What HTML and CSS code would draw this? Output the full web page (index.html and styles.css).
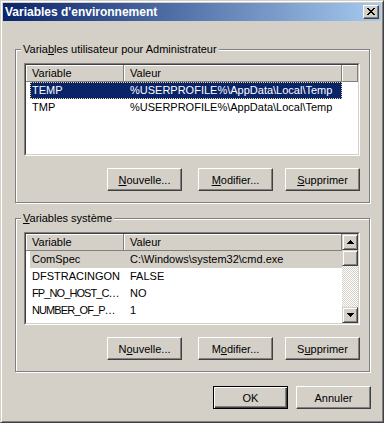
FILE: index.html
```html
<!DOCTYPE html>
<html lang="fr">
<head>
<meta charset="utf-8">
<title>Variables d'environnement</title>
<link rel="stylesheet" href="styles.css">
</head>
<body>
<div class="window">
  <div class="titlebar">
    <span class="title">Variables d'environnement</span>
    <button class="close" aria-label="Fermer">
      <svg width="8" height="7" viewBox="0 0 8 7" shape-rendering="crispEdges"><path d="M0 0h2v1H0zM6 0h2v1H6zM1 1h2v1H1zM5 1h2v1H5zM2 2h4v1H2zM3 3h2v1H3zM2 4h4v1H2zM1 5h2v1H1zM5 5h2v1H5zM0 6h2v1H0zM6 6h2v1H6z" fill="#000"/></svg>
    </button>
  </div>
  <div class="content">
    <section class="group">
      <span class="legend">Varia<u>b</u>les utilisateur pour Administrateur</span>
      <div class="list">
        <div class="list-inner">
          <div class="list-main">
            <div class="header">
              <div class="hcell c1">Variable</div>
              <div class="hcell c2">Valeur</div>
              <div class="hcell filler"></div>
            </div>
            <div class="row selected"><span class="cell c1">TEMP</span><span class="cell c2">%USERPROFILE%\AppData\Local\Temp</span></div>
            <div class="row"><span class="cell c1">TMP</span><span class="cell c2">%USERPROFILE%\AppData\Local\Temp</span></div>
          </div>
        </div>
      </div>
      <div class="btnrow">
        <button class="btn first"><u>N</u>ouvelle...</button>
        <button class="btn second"><u>M</u>odifier...</button>
        <button class="btn"><u>S</u>upprimer</button>
      </div>
    </section>

    <section class="group group-sys">
      <span class="legend"><u>V</u>ariables système</span>
      <div class="list">
        <div class="list-inner">
          <div class="list-main">
            <div class="header">
              <div class="hcell c1">Variable</div>
              <div class="hcell c2">Valeur</div>
            </div>
            <div class="row inactive"><span class="cell c1">ComSpec</span><span class="cell c2">C:\Windows\system32\cmd.exe</span></div>
            <div class="row"><span class="cell c1">DFSTRACINGON</span><span class="cell c2">FALSE</span></div>
            <div class="row"><span class="cell c1 trunc">FP_NO_HOST_C…</span><span class="cell c2">NO</span></div>
            <div class="row"><span class="cell c1 trunc">NUMBER_OF_P…</span><span class="cell c2">1</span></div>
          </div>
          <div class="vscroll">
            <div class="sb-btn">
              <svg width="7" height="4" viewBox="0 0 7 4" shape-rendering="crispEdges"><path d="M3 0h1v1H3zM2 1h3v1H2zM1 2h5v1H1zM0 3h7v1H0z" fill="#000"/></svg>
            </div>
            <div class="sb-btn"></div>
            <div class="sb-track"></div>
            <div class="sb-btn">
              <svg width="7" height="4" viewBox="0 0 7 4" shape-rendering="crispEdges"><path d="M0 0h7v1H0zM1 1h5v1H1zM2 2h3v1H2zM3 3h1v1H3z" fill="#000"/></svg>
            </div>
          </div>
        </div>
      </div>
      <div class="btnrow">
        <button class="btn first">N<u>o</u>uvelle...</button>
        <button class="btn second">M<u>o</u>difier...</button>
        <button class="btn">S<u>u</u>pprimer</button>
      </div>
    </section>

    <div class="dlg-buttons">
      <button class="btn default">OK</button>
      <button class="btn">Annuler</button>
    </div>
  </div>
</div>
</body>
</html>
```

FILE: styles.css
```css
* { box-sizing: border-box; }

body {
  margin: 0;
  font-family: "Liberation Sans", Arial, sans-serif;
  font-size: 11px;
  color: #000;
}

.window {
  width: 384px;
  height: 423px;
  background: #d4d0c8;
  border: 1px solid;
  border-color: #d4d0c8 #404040 #404040 #d4d0c8;
  box-shadow: inset 1px 1px #fff, inset -1px -1px #808080;
  padding: 2px;
}

.titlebar {
  height: 18px;
  display: flex;
  align-items: center;
  justify-content: space-between;
  background: linear-gradient(to right, #0a246a, #a6caf0);
  padding: 0 2px 0 2px;
}

.title {
  color: #fff;
  font-weight: bold;
  font-size: 12px;
  line-height: 18px;
  white-space: nowrap;
}

.close {
  width: 16px;
  height: 14px;
  padding: 2px 0 0 3px;
  margin: 0;
  background: #d4d0c8;
  border: 1px solid;
  border-color: #fff #404040 #404040 #fff;
  box-shadow: inset -1px -1px #808080;
  display: flex;
  align-items: flex-start;
  justify-content: flex-start;
}

.close svg { display: block; }

.content {
  padding: 28px 0 0 12px;
}

.group {
  position: relative;
  width: 355px;
  height: 154px;
  border: 1px solid #808080;
  box-shadow: inset 1px 1px #fff, 1px 1px #fff;
  padding: 13px 0 0 8px;
}

.group-sys {
  margin-top: 15px;
}

.legend {
  position: absolute;
  top: -7px;
  left: 5px;
  padding: 0 2px;
  line-height: 13px;
  background: #d4d0c8;
  white-space: nowrap;
}

.list {
  width: 336px;
  height: 93px;
  border: 1px solid;
  border-color: #808080 #fff #fff #808080;
}

.list-inner {
  height: 100%;
  border: 1px solid;
  border-color: #404040 #d4d0c8 #d4d0c8 #404040;
  background: #fff;
  display: flex;
  overflow: hidden;
}

.list-main {
  flex: 1;
  min-width: 0;
}

.header {
  display: flex;
  height: 17px;
}

.hcell {
  height: 17px;
  background: #d4d0c8;
  border-right: 1px solid #808080;
  border-bottom: 1px solid #808080;
  box-shadow: inset 1px 1px #fff;
  padding-left: 6px;
  line-height: 16px;
  white-space: nowrap;
}

.hcell.c1 { width: 98px; }
.hcell.c2 { width: 218px; }
.hcell.filler { flex: 1; }

.row {
  display: flex;
  height: 17px;
  line-height: 17px;
  margin-left: 4px;
  width: 312px;
  white-space: nowrap;
}

.cell { overflow: hidden; }
.row .c1 { width: 94px; padding-left: 2px; }
.row .c2 { width: 218px; padding-left: 6px; }
.row .trunc { letter-spacing: -0.9px; }

.row.selected {
  background: #0a246a;
  color: #fff;
  outline: 1px dotted #f0d890;
  outline-offset: -1px;
}

.row.inactive {
  background: #d4d0c8;
}

.vscroll {
  width: 16px;
  display: flex;
  flex-direction: column;
}

.sb-btn {
  height: 16px;
  flex: none;
  background: #d4d0c8;
  border: 1px solid;
  border-color: #d4d0c8 #404040 #404040 #d4d0c8;
  box-shadow: inset 1px 1px #fff, inset -1px -1px #808080;
  display: flex;
  align-items: center;
  justify-content: center;
}

.sb-btn svg { display: block; }

.sb-track {
  flex: 1;
  background: repeating-conic-gradient(#fff 0 25%, #d4d0c8 0 50%) 0 0 / 2px 2px;
}

.btnrow {
  width: 336px;
  display: flex;
  justify-content: flex-end;
  margin-top: 12px;
}

.btn {
  width: 75px;
  height: 23px;
  padding: 0;
  margin: 0;
  font-family: inherit;
  font-size: 11px;
  color: #000;
  background: #d4d0c8;
  border: 1px solid;
  border-color: #fff #404040 #404040 #fff;
  box-shadow: inset -1px -1px #808080;
  border-radius: 0;
}

.btn.first { margin-right: 16px; }
.btn.second { margin-right: 12px; }

.btn.default {
  border: 1px solid #000;
  box-shadow: inset 1px 1px #fff, inset -1px -1px #404040, inset -2px -2px #808080;
}

.dlg-buttons {
  width: 356px;
  display: flex;
  justify-content: flex-end;
  gap: 8px;
  margin-top: 14px;
}
```
